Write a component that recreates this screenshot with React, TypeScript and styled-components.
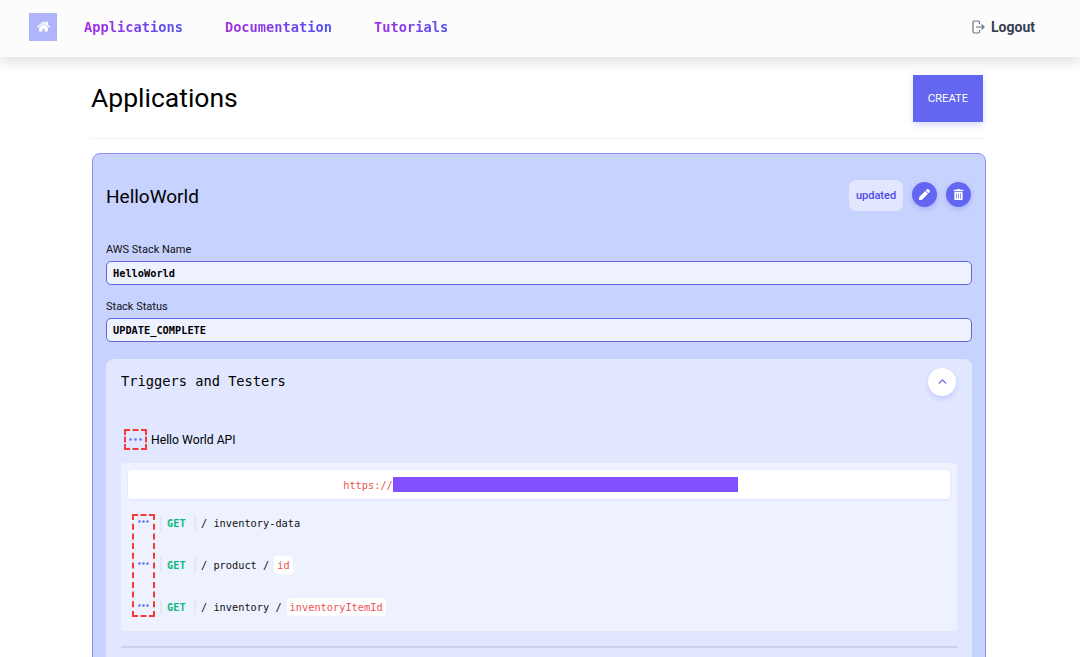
import styled, { createGlobalStyle } from 'styled-components';
import { FaHome, FaPen, FaTrashAlt } from 'react-icons/fa';
import { ChevronUp } from 'lucide-react';

const sans = `Roboto, "Noto Sans", sans-serif`;
const mono = `"DejaVu Sans Mono", "Liberation Mono", monospace`;

const GlobalStyle = createGlobalStyle`
    html, body {
        margin: 0;
        height: 657px;
        overflow: hidden;
        background: #fff;
        font-family: ${sans};
    }
`;

const Nav = styled.nav`
    position: relative;
    z-index: 2;
    box-sizing: border-box;
    display: flex;
    align-items: center;
    height: 57px;
    padding: 0 45px 4px 29px;
    background: #fcfcfd;
    box-shadow: 0 4px 12px rgba(60, 60, 80, .18);
`;

const HomeButton = styled.div`
    display: flex;
    align-items: center;
    justify-content: center;
    width: 28px;
    height: 28px;
    margin-right: 27px;
    background: #b0b5fb;
    color: #fff;
    font-size: 13px;
`;

const NavLinks = styled.div`
    display: flex;
    gap: 42px;
`;

const NavLink = styled.a`
    font-family: ${mono};
    font-size: 13.7px;
    font-weight: 700;
    background: linear-gradient(90deg, #a62ce0, #4f52f2);
    -webkit-background-clip: text;
    background-clip: text;
    color: transparent;
`;

const Logout = styled.div`
    display: flex;
    align-items: center;
    gap: 6px;
    margin-left: auto;
    padding-top: 1px;
    color: #374151;
    font-size: 14px;
    font-weight: 700;
`;

const Main = styled.main`
    width: 895px;
    margin-left: 91px;
`;

const Header = styled.header`
    box-sizing: border-box;
    display: flex;
    align-items: center;
    justify-content: space-between;
    height: 82px;
    padding: 2px 3px 0 0;
    border-bottom: 1px solid #eef0fb;
`;

const Title = styled.h1`
    margin: 0 0 2px;
    font-size: 26.5px;
    font-weight: 400;
    color: #000;
`;

const CreateButton = styled.button`
    width: 70px;
    height: 47px;
    border: 0;
    background: #6366f1;
    color: #fff;
    font-family: ${sans};
    font-size: 11.3px;
    box-shadow: 0 3px 6px rgba(99, 102, 241, .25);
`;

const Card = styled.section`
    box-sizing: border-box;
    margin: 14px 0 0 1px;
    padding: 0 13px 40px;
    background: #c7d2fe;
    border: 1px solid #8e8ff5;
    border-radius: 8px;
`;

const CardHead = styled.div`
    box-sizing: border-box;
    display: flex;
    align-items: center;
    height: 89px;
    padding-bottom: 5px;
`;

const CardTitle = styled.h2`
    margin: 0 auto 0 0;
    font-size: 19px;
    font-weight: 400;
    color: #000;
`;

const Chip = styled.span`
    box-sizing: border-box;
    display: flex;
    align-items: center;
    justify-content: center;
    width: 54px;
    height: 31px;
    margin: 0 9px 2px 0;
    background: #e0e7ff;
    border-radius: 7px;
    color: #4f46e5;
    font-size: 11px;
    font-weight: 500;
`;

const RoundButton = styled.span<{ $first?: boolean }>`
    display: flex;
    align-items: center;
    justify-content: center;
    width: 25px;
    height: 25px;
    margin: 0 ${props => props.$first ? '0' : '1px'} 3px ${props => props.$first ? '0' : '9px'};
    border-radius: 50%;
    background: #6366f1;
    color: #fff;
    font-size: 11px;
    box-shadow: 0 2px 5px rgba(79, 70, 229, .25);
`;

const Field = styled.div`
    margin-bottom: 15px;
`;

const Label = styled.div`
    height: 18px;
    font-size: 11px;
    line-height: 13px;
    color: #111;
`;

const Value = styled.div`
    box-sizing: border-box;
    display: flex;
    align-items: center;
    height: 24px;
    padding: 0 0 1px 6px;
    background: #eef2ff;
    border: 1px solid #6366d8;
    border-radius: 5px;
    font-family: ${mono};
    font-size: 10.3px;
    font-weight: 700;
    color: #000;
`;

const Accordion = styled.div`
    margin-top: 17px;
    padding: 0 15px;
    height: 400px;
    background: #e0e7ff;
    border-radius: 8px;
`;

const AccordionHead = styled.div`
    display: flex;
    align-items: center;
    justify-content: space-between;
    height: 45px;
    padding: 0 1px 0 0;
`;

const AccordionTitle = styled.div`
    margin-bottom: 2px;
    font-family: ${mono};
    font-size: 13.7px;
    color: #000;
`;

const Toggle = styled.span`
    display: flex;
    align-items: center;
    justify-content: center;
    width: 28px;
    height: 28px;
    border-radius: 50%;
    background: #fff;
    color: #6366f1;
    box-shadow: 0 3px 5px rgba(99, 102, 241, .2);
`;

const ApiHead = styled.div`
    display: flex;
    align-items: center;
    gap: 4px;
    margin: 25px 0 13px 3px;
    height: 21px;
    font-size: 12.2px;
    color: #000;
`;

const DashedBox = styled.span`
    box-sizing: border-box;
    display: flex;
    align-items: center;
    justify-content: center;
    width: 23px;
    height: 21px;
    border: 2px dashed #f63b3b;
`;

const ApiPanel = styled.div`
    box-sizing: border-box;
    height: 168px;
    padding: 7px;
    background: #eef2ff;
    border-radius: 4px;
`;

const UrlBar = styled.div`
    display: flex;
    align-items: center;
    justify-content: center;
    height: 29px;
    padding-left: 3px;
    background: #fff;
    border-radius: 4px;
    box-shadow: 0 1px 3px rgba(99, 102, 241, .12);
    font-family: ${mono};
    font-size: 10.3px;
    color: #f05252;
`;

const Redacted = styled.span`
    display: block;
    width: 345px;
    height: 15px;
    background: #8250ff;
`;

const Routes = styled.div`
    position: relative;
    display: flex;
    flex-direction: column;
    gap: 18px;
    margin-top: 12px;
`;

const RouteAnnotation = styled.div`
    position: absolute;
    left: 4px;
    top: 3px;
    width: 23px;
    height: 103px;
    box-sizing: border-box;
    border: 2px dashed #f63b3b;
`;

const Route = styled.div`
    display: flex;
    align-items: center;
    height: 24px;
    font-family: ${mono};
    font-size: 10.3px;
    color: #111;
`;

const RouteDots = styled.span`
    display: flex;
    justify-content: center;
    width: 22px;
    margin: 0 6px 3px 4px;
`;

const Method = styled.span`
    box-sizing: content-box;
    width: 20px;
    height: 16px;
    padding: 0 7px 0 5px;
    border-left: 2px solid #e3e7f6;
    border-right: 2px solid #e3e7f6;
    margin-right: 5px;
    color: #10b981;
    font-weight: 700;
    line-height: 16px;
`;

const Segment = styled.span`
    white-space: pre;
`;

const Param = styled.span`
    display: inline-block;
    margin-left: 5px;
    padding: 3px;
    background: #fff;
    border-radius: 4px;
    color: #f05252;
`;

const PanelRule = styled.div`
    height: 2px;
    margin-top: 15px;
    background: #c9d3ec;
`;

function Dots({ gap }: { gap: number }) {
    return (
        <svg width={gap * 2 + 3} height="3" fill="#5b6cf5">
            <circle cx="1.5" cy="1.5" r="1.2" />
            <circle cx={gap + 1.5} cy="1.5" r="1.2" />
            <circle cx={gap * 2 + 1.5} cy="1.5" r="1.2" />
        </svg>
    );
}

function LogoutIcon() {
    return (
        <svg width="13" height="14" viewBox="0 0 13 14" fill="none" stroke="#6b7280" strokeWidth="1.2">
            <path d="M7.5 4V2.5a1.5 1.5 0 0 0-1.5-1.5H2.5A1.5 1.5 0 0 0 1 2.5v9A1.5 1.5 0 0 0 2.5 13H6a1.5 1.5 0 0 0 1.5-1.5V10" />
            <path d="M4 7h8M9.5 4.5 12 7l-2.5 2.5" />
        </svg>
    );
}

const routes = [
    { path: '/ inventory-data', param: '' },
    { path: '/ product /', param: 'id' },
    { path: '/ inventory /', param: 'inventoryItemId' },
];

export default function App() {
    return (
        <>
            <GlobalStyle />
            <Nav>
                <HomeButton><FaHome /></HomeButton>
                <NavLinks>
                    <NavLink>Applications</NavLink>
                    <NavLink>Documentation</NavLink>
                    <NavLink>Tutorials</NavLink>
                </NavLinks>
                <Logout><LogoutIcon />Logout</Logout>
            </Nav>
            <Main>
                <Header>
                    <Title>Applications</Title>
                    <CreateButton>CREATE</CreateButton>
                </Header>
                <Card>
                    <CardHead>
                        <CardTitle>HelloWorld</CardTitle>
                        <Chip>updated</Chip>
                        <RoundButton $first><FaPen /></RoundButton>
                        <RoundButton><FaTrashAlt /></RoundButton>
                    </CardHead>
                    <Field>
                        <Label>AWS Stack Name</Label>
                        <Value>HelloWorld</Value>
                    </Field>
                    <Field>
                        <Label>Stack Status</Label>
                        <Value>UPDATE_COMPLETE</Value>
                    </Field>
                    <Accordion>
                        <AccordionHead>
                            <AccordionTitle>Triggers and Testers</AccordionTitle>
                            <Toggle><ChevronUp size={13} strokeWidth={2.5} /></Toggle>
                        </AccordionHead>
                        <ApiHead>
                            <DashedBox><Dots gap={5} /></DashedBox>
                            Hello World API
                        </ApiHead>
                        <ApiPanel>
                            <UrlBar>https://<Redacted /></UrlBar>
                            <Routes>
                                <RouteAnnotation />
                                {routes.map(route => (
                                    <Route key={route.path}>
                                        <RouteDots><Dots gap={4} /></RouteDots>
                                        <Method>GET</Method>
                                        <Segment>{route.path}</Segment>
                                        {route.param && <Param>{route.param}</Param>}
                                    </Route>
                                ))}
                            </Routes>
                        </ApiPanel>
                        <PanelRule />
                    </Accordion>
                </Card>
            </Main>
        </>
    );
}
